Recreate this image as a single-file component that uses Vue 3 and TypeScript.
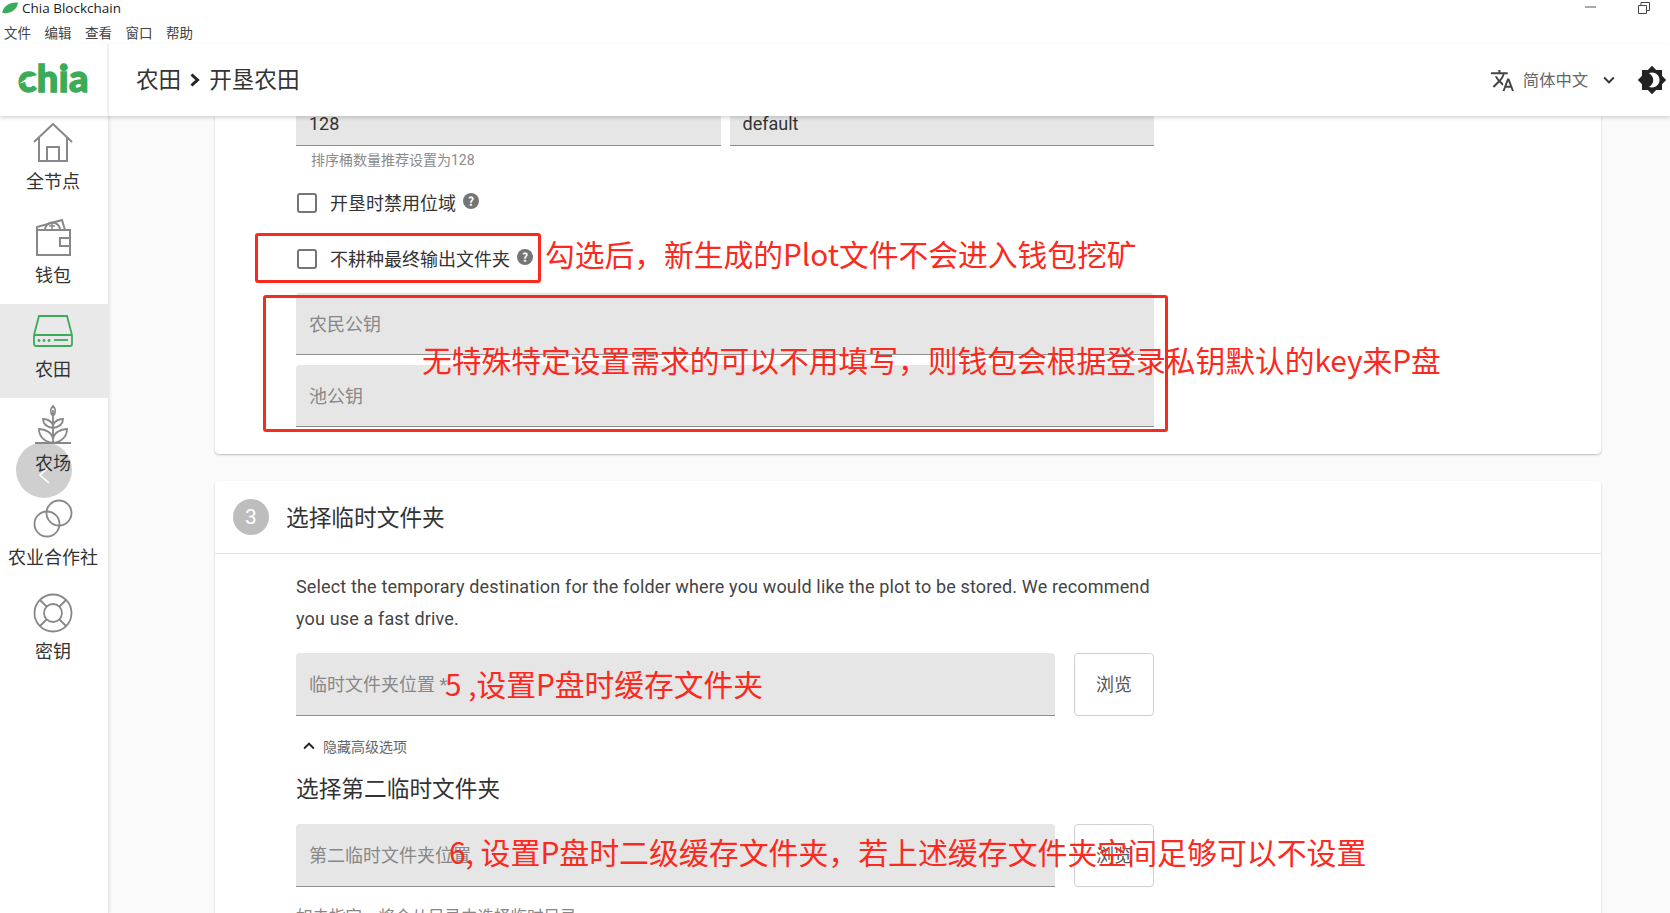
<script setup lang="ts">
const menus: string[] = ['文件', '编辑', '查看', '窗口', '帮助']
</script>

<template>
  <div class="app">
    <div class="titlebar">
      <svg class="leaf" viewBox="0 0 18 12" width="18" height="12"><path d="M1 12C2 4 8 0 17 0.5 16 8 10 12 1 11Z" fill="#3aac59" /></svg>
      <span class="wintitle">Chia Blockchain</span>
      <svg class="winbtn min" viewBox="0 0 11 11" width="11" height="11"><path d="M0 6h11" stroke="#555" fill="none" /></svg>
      <svg class="winbtn restore" viewBox="0 0 12 12" width="12" height="12"><path d="M.5 3.5h8v8h-8zM3 3.5V.5h8.500v8h-3" stroke="#444" fill="none" /></svg>
    </div>
    <div class="menubar">
      <span v-for="m in menus" :key="m">{{ m }}</span>
    </div>
    <header class="appbar">
      <div class="logo">
        <span class="logotext">chia</span>
        <svg class="logoleaf" viewBox="0 0 24 16" width="24" height="16"><path d="M0 14C4 13 7 7 20 5 17 10 13 12 7 12Z" fill="#fff" /></svg>
      </div>
      <div class="crumbs">
        <span>农田</span>
        <svg viewBox="0 0 12 16" width="12" height="16"><path d="M2.500 2.500 8.500 8l-6 5.500" fill="none" stroke="#222" stroke-width="3" /></svg>
        <span>开垦农田</span>
      </div>
      <div class="lang">
        <svg viewBox="0 0 24 24" width="25" height="25"><path fill="#444" d="M12.870 15.070l-2.540-2.510.03-.03A17.520 17.520 0 0 0 14.070 6H17V4h-7V2H8v2H1v2h11.170C11.500 7.920 10.440 9.750 9 11.350 8.070 10.320 7.300 9.190 6.690 8h-2c.73 1.630 1.730 3.170 2.980 4.560l-5.090 5.020L4 19l5-5 3.110 3.110.76-2.040zM18.500 10h-2L12 22h2l1.120-3h4.750L21 22h2l-4.500-12zm-2.620 7l1.620-4.330L19.120 17h-3.240z" /></svg>
        <span class="langname">简体中文</span>
        <svg viewBox="0 0 24 24" width="22" height="22"><path fill="#333" d="M7.410 8.590 12 13.170l4.590-4.580L18 10l-6 6-6-6z" /></svg>
      </div>
      <svg class="theme" viewBox="0 0 24 24" width="30" height="30"><path fill="#222" d="M20 8.690V4h-4.690L12 .69 8.690 4H4v4.690L.69 12 4 15.310V20h4.690L12 23.310 15.310 20H20v-4.690L23.310 12 20 8.690zM12 18c-.89 0-1.740-.2-2.500-.55C11.560 16.500 13 14.420 13 12s-1.440-4.500-3.500-5.450C10.260 6.200 11.110 6 12 6c3.310 0 6 2.690 6 6s-2.690 6-6 6z" /></svg>
    </header>

    <div class="body">
      <nav class="sidebar">
        <div class="fab">
          <svg viewBox="0 0 16 24" width="16" height="24"><path d="M13 5 4 13l9 8" fill="none" stroke="#fff" stroke-width="1.600" /></svg>
        </div>
        <div class="navitem">
          <svg viewBox="0 0 40 40" width="40" height="40"><path d="M1 19 20 1l19 18M6 15v23h28V15M14 38V24h12v14" fill="none" stroke="#888" stroke-width="2" /></svg>
          <span>全节点</span>
        </div>
        <div class="navitem">
          <svg viewBox="0 0 40 40" width="40" height="40"><path d="M4 13h33v25H4zM37 21h-10v8h10M4 13V10l25-7 3 10" fill="none" stroke="#888" stroke-width="2" /><path d="M12 13a7.500 7.500 0 0 1 15 0" fill="none" stroke="#888" stroke-width="2" /><path d="M19 6v7M16 9h6" stroke="#888" stroke-width="1.500" /></svg>
          <span>钱包</span>
        </div>
        <div class="navitem active">
          <svg viewBox="0 0 40 34" width="40" height="34"><path d="M1 21 6 2h28l5 19v9a2 2 0 0 1-2 2H3a2 2 0 0 1-2-2zM1 21h38" fill="none" stroke="#3aac59" stroke-width="1.800" /><path d="M21 26h14" stroke="#3aac59" stroke-width="1.800" /><circle cx="6" cy="26.500" r="1.400" fill="#3aac59" /><circle cx="11" cy="26.500" r="1.400" fill="#3aac59" /><circle cx="16" cy="26.500" r="1.400" fill="#3aac59" /></svg>
          <span>农田</span>
        </div>
        <div class="navitem">
          <svg viewBox="0 0 36 40" width="36" height="40"><g fill="none" stroke="#888" stroke-width="1.800"><path d="M0 38h36M18 38V5M18 1c3 3 3 7 0 10-3-3-3-7 0-10zM18 20c-2-4-6-6-10-6 0 5 4 8 10 9 6-1 10-4 10-9-4 0-8 2-10 6zM18 34c-1-6-7-10-14-10 0 8 6 13 14 14 8-1 14-6 14-14-7 0-13 4-14 10z" /></g></svg>
          <span>农场</span>
        </div>
        <div class="navitem">
          <svg viewBox="0 0 40 40" width="40" height="40"><circle cx="14" cy="25" r="12.500" fill="none" stroke="#888" stroke-width="1.800" /><circle cx="26" cy="14" r="12.500" fill="none" stroke="#888" stroke-width="1.800" /></svg>
          <span>农业合作社</span>
        </div>
        <div class="navitem">
          <svg viewBox="0 0 40 40" width="40" height="40"><g fill="none" stroke="#888" stroke-width="1.800"><circle cx="20" cy="20" r="18.500" /><circle cx="20" cy="20" r="9" /><path d="M7 7l7 7M33 7l-7 7M7 33l7-7M33 33l-7-7" /></g></svg>
          <span>密钥</span>
        </div>
      </nav>

      <main class="content">
        <section class="card first">
          <div class="form">
            <div class="pair">
              <div class="field clipped">128</div>
              <div class="field clipped">default</div>
            </div>
            <div class="helper">排序桶数量推荐设置为128</div>
            <label class="check one">
              <span class="box"></span><span class="checktext">开垦时禁用位域</span><span class="help">?</span>
            </label>
            <label class="check two">
              <span class="box"></span><span class="checktext">不耕种最终输出文件夹</span><span class="help">?</span>
            </label>
            <div class="field tall key1 ph">农民公钥</div>
            <div class="field tall key2 ph">池公钥</div>
          </div>
        </section>

        <section class="card second">
          <div class="cardhead">
            <span class="step">3</span>
            <h2>选择临时文件夹</h2>
          </div>
          <div class="form">
            <p class="desc">Select the temporary destination for the folder where you would like the plot to be stored. We recommend you use a fast drive.</p>
            <div class="browse">
              <div class="field tall ph">临时文件夹位置 *</div>
              <button class="browsebtn">浏览</button>
            </div>
            <div class="toggle">
              <svg viewBox="0 0 24 24" width="22" height="22"><path fill="#222" d="M7.410 15.410 12 10.830l4.590 4.580L18 14l-6-6-6 6z" /></svg>
              <span>隐藏高级选项</span>
            </div>
            <h3>选择第二临时文件夹</h3>
            <div class="browse">
              <div class="field tall ph">第二临时文件夹位置</div>
              <button class="browsebtn">浏览</button>
            </div>
            <div class="cutoff">如未指定，将会从目录中选择临时目录</div>
          </div>
        </section>
      </main>
    </div>

    <div class="redbox a"></div>
    <div class="redbox b"></div>
    <div class="note n1">勾选后，新生成的Plot文件不会进入钱包挖矿</div>
    <div class="note n2">无特殊特定设置需求的可以不用填写，则钱包会根据登录私钥默认的key来P盘</div>
    <div class="note n3">5 ,设置P盘时缓存文件夹</div>
    <div class="note n4">6, 设置P盘时二级缓存文件夹，若上述缓存文件夹空间足够可以不设置</div>
  </div>
</template>

<style>
html, body { margin: 0; padding: 0; background: #fff; }
</style>

<style scoped>
.app {
  position: relative;
  width: 1670px;
  height: 913px;
  overflow: hidden;
  display: flex;
  flex-direction: column;
  background: #fff;
  color: #333;
  font-family: "Noto Sans CJK SC", "Noto Sans", sans-serif;
}
.titlebar {
  height: 22px;
  flex: none;
  display: flex;
  align-items: center;
  position: relative;
}
.leaf { margin: -6px 3px 0 1px; }
.wintitle {
  font-family: "Open Sans", sans-serif;
  font-size: 13.500px;
  color: #222;
  margin-top: -6px;
}
.winbtn { position: absolute; }
.min { left: 1585px; top: 1px; }
.restore { left: 1638px; top: 2px; }
.menubar {
  height: 22px;
  flex: none;
  display: flex;
  gap: 13.500px;
  padding-left: 4px;
  font-size: 13.500px;
  line-height: 20px;
  color: #444;
}
.appbar {
  height: 72px;
  flex: none;
  display: flex;
  align-items: center;
  position: relative;
  z-index: 3;
  background: #fff;
  box-shadow: 0 2px 4px rgba(0, 0, 0, 0.16);
}
.logo {
  width: 109px;
  height: 72px;
  flex: none;
  box-sizing: border-box;
  border-right: 2px solid #f0f0f0;
  position: relative;
  display: flex;
  justify-content: center;
  align-items: center;
}
.logotext {
  font-family: Lato, sans-serif;
  font-weight: 900;
  font-size: 38px;
  line-height: 1;
  letter-spacing: 0.4px;
  color: #3aac59;
  -webkit-text-stroke: 1.400px #3aac59;
  margin: -6px 0 0 0;
}
.logoleaf { position: absolute; left: 18px; top: 26px; }
.crumbs {
  display: flex;
  align-items: center;
  gap: 8px;
  margin-left: 27px;
  padding-bottom: 3px;
  font-size: 22.600px;
  color: #333;
}
.crumbs svg { margin-top: 3px; }
.lang {
  margin-left: auto;
  display: flex;
  align-items: center;
  color: #666;
  font-size: 16.300px;
}
.langname { margin: 0 10px 3px 8px; }
.theme { margin: 0 3px 0 17px; }

.body { flex: 1; min-height: 0; display: flex; }
.sidebar {
  width: 109px;
  flex: none;
  box-sizing: border-box;
  border-right: 1px solid #e6e6e6;
  box-shadow: 1px 0 3px rgba(0, 0, 0, 0.08);
  background: #fff;
  position: relative;
  z-index: 1;
}
.navitem {
  position: relative;
  height: 94px;
  box-sizing: border-box;
  padding: 7px 2px 0 0;
  display: flex;
  flex-direction: column;
  align-items: center;
  font-size: 18px;
  line-height: 26px;
  color: #333;
}
.navitem svg { height: 40px; flex: none; margin-bottom: 4px; }
.navitem.active { background: #e9e9e9; }

.content {
  flex: 1;
  min-width: 0;
  background: #fafafa;
  padding: 0 69px 0 106px;
  overflow: hidden;
}
.card {
  background: #fff;
  border-radius: 4px;
  box-shadow: 0 1px 2px rgba(0, 0, 0, 0.25);
}
.first { border-radius: 0 0 4px 4px; padding-bottom: 27px; }
.second { margin-top: 27px; }
.form { width: 858px; margin-left: 81px; }
.pair { display: grid; grid-template-columns: 1fr 1fr; gap: 9px; }
.field {
  background: #e6e6e6;
  border-bottom: 1px solid #8f8f8f;
  border-radius: 4px 4px 0 0;
  box-sizing: border-box;
  padding-left: 13px;
  font-family: Roboto, "Noto Sans CJK SC", sans-serif;
  font-size: 18px;
  color: #333;
}
.clipped { height: 30px; line-height: 16px; border-radius: 0; }
.tall { height: 62px; display: flex; align-items: center; padding-bottom: 2px; }
.ph { color: #888; }
.helper {
  margin-top: 5px;
  padding-left: 15px;
  font-family: Roboto, "Noto Sans CJK SC", sans-serif;
  font-size: 14px;
  line-height: 18px;
  color: #8a8a8a;
}
.check {
  display: flex;
  align-items: center;
  height: 20px;
  font-size: 18px;
  color: #333;
}
.checktext { margin-top: -2px; }
.check.one { margin-top: 24px; }
.check.two { margin-top: 36px; }
.box {
  width: 20px;
  height: 20px;
  box-sizing: border-box;
  border: 2px solid #757575;
  border-radius: 3px;
  margin: 0 13px 0 1px;
}
.help {
  width: 16px;
  height: 16px;
  border-radius: 50%;
  background: #757575;
  color: #fff;
  font-size: 12px;
  font-weight: 700;
  line-height: 16px;
  text-align: center;
  margin: -4px 0 0 7px;
}
.key1 { margin-top: 24px; }
.key2 { margin-top: 10px; }
.cardhead {
  height: 73px;
  box-sizing: border-box;
  border-bottom: 1px solid #e3e3e3;
  display: flex;
  align-items: center;
  padding-left: 18px;
  gap: 17px;
}
.step {
  width: 36px;
  height: 36px;
  border-radius: 50%;
  background: #bdbdbd;
  color: #fff;
  font-family: Roboto, sans-serif;
  font-size: 21px;
  line-height: 36px;
  text-align: center;
}
h2, h3 {
  margin: 0;
  font-size: 22.700px;
  font-weight: 400;
  color: #333;
}
h2 { padding-bottom: 2px; }
.desc {
  margin: 17px 0 18px;
  font-family: Roboto, sans-serif;
  font-size: 18px;
  letter-spacing: 0.150px;
  line-height: 32px;
  color: #444;
}
.browse { display: grid; grid-template-columns: 1fr 80px; gap: 19px; }
.browse .tall { height: 63px; }
.browsebtn {
  border: 1px solid #cfcfcf;
  border-radius: 4px;
  background: #fff;
  padding: 0 0 3px;
  font-family: "Noto Sans CJK SC", sans-serif;
  font-size: 18px;
  color: #555;
}
.toggle {
  display: flex;
  align-items: center;
  height: 18px;
  margin: 21px 0 0 2px;
  font-size: 14px;
  color: #666;
  gap: 3px;
}
h3 { line-height: 32px; margin: 17px 0 20px; }
.cutoff { margin-top: 21px; font-size: 16.500px; line-height: 16px; color: #888; }

.fab {
  position: absolute;
  left: 16px;
  top: 326px;
  width: 56px;
  height: 56px;
  border-radius: 50%;
  background: #cfcfcf;
  display: flex;
  align-items: center;
  justify-content: center;
  padding-top: 8px;
  box-sizing: border-box;
}
.redbox {
  position: absolute;
  box-sizing: border-box;
  border: 3px solid #fb2a20;
  border-radius: 3px;
  z-index: 6;
}
.redbox.a { left: 255px; top: 233px; width: 286px; height: 50px; }
.redbox.b { left: 263px; top: 295px; width: 905px; height: 137px; }
.note {
  position: absolute;
  z-index: 7;
  color: #fb2a20;
  font-size: 29.750px;
  line-height: 40px;
  white-space: nowrap;
}
.n1 { left: 545px; top: 233px; }
.n2 { left: 422px; top: 339px; }
.n3 { left: 445px; top: 663px; }
.n4 { left: 449px; top: 831px; font-size: 29.900px; }
</style>
